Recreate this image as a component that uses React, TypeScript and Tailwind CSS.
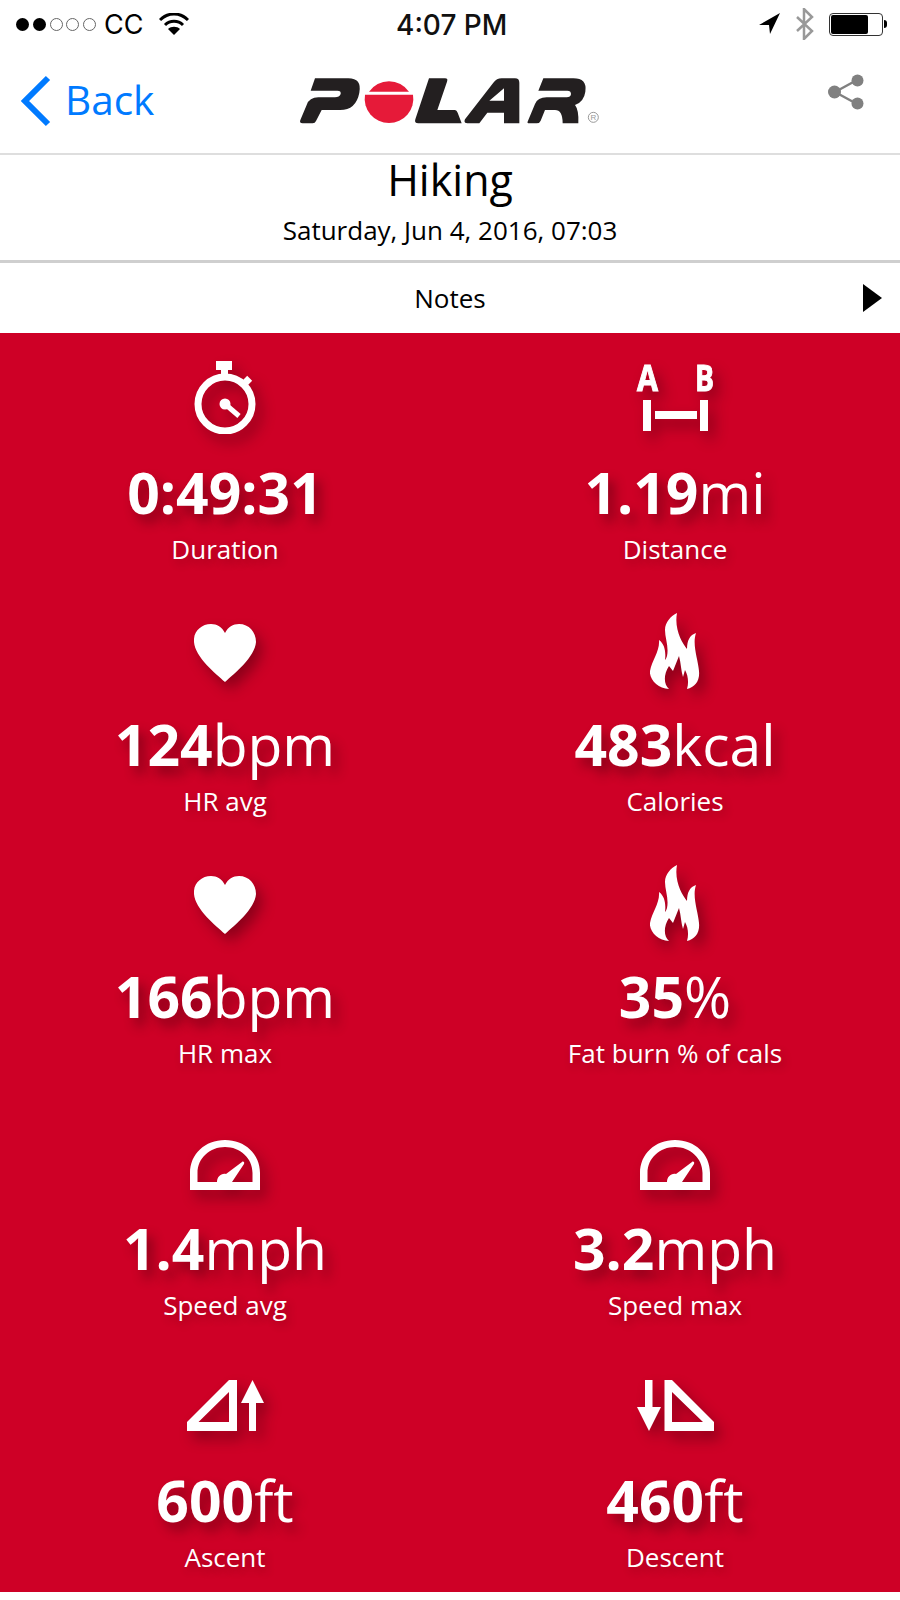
import type { ReactNode } from "react";

const SHADOW = "[filter:drop-shadow(6px_8px_7px_rgba(60,0,10,0.45))]";

function StopwatchIcon() {
  return (
    <svg width="62" height="73" viewBox="0 0 62 73" className={SHADOW}>
      <rect x="22" y="0" width="16" height="9" fill="#fff" />
      <rect x="27" y="9" width="7" height="6" fill="#fff" />
      <rect x="48" y="17" width="9" height="7" transform="rotate(-45 52.500 20.500)" fill="#fff" />
      <circle cx="31" cy="43" r="27" fill="none" stroke="#fff" strokeWidth="7" />
      <circle cx="31" cy="43" r="5.500" fill="#fff" />
      <path d="M31 43 L45 55" stroke="#fff" strokeWidth="5" fill="none" />
    </svg>
  );
}

function DistanceIcon() {
  return (
    <svg width="89" height="78" viewBox="-6 -12 89 78" className={SHADOW}>
      <g fill="#fff" stroke="#fff" strokeWidth="1" fontFamily="'Open Sans', sans-serif" fontWeight="700" fontSize="36">
        <text x="0" y="26" textLength="21" lengthAdjust="spacingAndGlyphs">A</text>
        <text x="58" y="26" textLength="19" lengthAdjust="spacingAndGlyphs">B</text>
      </g>
      <rect x="6" y="35" width="8" height="31" fill="#fff" />
      <rect x="63" y="35" width="8" height="31" fill="#fff" />
      <rect x="18" y="46" width="42" height="8" fill="#fff" />
    </svg>
  );
}

function HeartIcon() {
  return (
    <svg width="62" height="58" viewBox="0 0 62 58" className={SHADOW}>
      <path d="M31 58 C22 50 1 33 0 18 C-1 8 7 0 17 0 C23 0 28 3 31 9 C34 3 39 0 45 0 C55 0 62 8 62 18 C61 33 40 50 31 58 Z" fill="#fff" />
    </svg>
  );
}

function FlameIcon() {
  return (
    <svg width="50" height="77" viewBox="0 0 50 77" className={SHADOW}>
      <path d="M27 0 C21 3 15 9 15 17 C15 25 19 34 17 43 C16 46 15 47 15 47 C16 40 15 31 9 27 C10 38 2 47 0 58 C-1 66 8 76 19 76 C14 72 13 62 19 53 L23 58 L29 43 C31 50 31 58 33 64 L35 57 C38 62 39 70 37 76 C45 74 50 68 49 58 C48 46 42 32 46 20 C40 22 37 27 37 36 C32 30 24 16 27 0 Z" fill="#fff" />
    </svg>
  );
}

function GaugeIcon() {
  return (
    <svg width="70" height="50" viewBox="0 0 70 50" className={SHADOW}>
      <path d="M0 50 V33 C0 14 15 0 35 0 C55 0 70 14 70 33 V50 Z M7.500 42 H27 C27 37 31 33 36 34 L52 22 C53 21 55 22 54 24 L42 42 H62.500 V33 C62.500 18 50 7 35 7 C20 7 7.500 18 7.500 33 Z" fill="#fff" fillRule="evenodd" />
    </svg>
  );
}

function AscentIcon() {
  return (
    <svg width="77" height="51" viewBox="0 0 77 51" className={SHADOW}>
      <path d="M0 51 V42 L42 0 H50 V51 Z M11.500 42 H42 V12 Z" fill="#fff" fillRule="evenodd" />
      <path d="M65.500 0 L77 23 H69 V51 H62 V23 H54 Z" fill="#fff" />
    </svg>
  );
}

function DescentIcon() {
  return (
    <svg width="77" height="51" viewBox="0 0 77 51" className={SHADOW}>
      <path d="M27.500 0 H35 L77 42 V51 H27.500 Z M35 12 V42 H66 Z" fill="#fff" fillRule="evenodd" />
      <path d="M8 0 H15.500 V27 H24 L12 51 L0 27 H8 Z" fill="#fff" />
    </svg>
  );
}

type Stat = { icon: ReactNode; iconPad: string; value: string; unit?: string; label: string };

const stats: Stat[] = [
  { icon: <StopwatchIcon />, iconPad: "pt-[28px]", value: "0:49:31", label: "Duration" },
  { icon: <DistanceIcon />, iconPad: "pt-[20px]", value: "1.19", unit: "mi", label: "Distance" },
  { icon: <HeartIcon />, iconPad: "pt-[39px]", value: "124", unit: "bpm", label: "HR avg" },
  { icon: <FlameIcon />, iconPad: "pt-[28px]", value: "483", unit: "kcal", label: "Calories" },
  { icon: <HeartIcon />, iconPad: "pt-[39px]", value: "166", unit: "bpm", label: "HR max" },
  { icon: <FlameIcon />, iconPad: "pt-[28px]", value: "35", unit: "%", label: "Fat burn % of cals" },
  { icon: <GaugeIcon />, iconPad: "pt-[51px]", value: "1.4", unit: "mph", label: "Speed avg" },
  { icon: <GaugeIcon />, iconPad: "pt-[51px]", value: "3.2", unit: "mph", label: "Speed max" },
  { icon: <AscentIcon />, iconPad: "pt-[39px]", value: "600", unit: "ft", label: "Ascent" },
  { icon: <DescentIcon />, iconPad: "pt-[39px]", value: "460", unit: "ft", label: "Descent" },
];

function StatusBar() {
  return (
    <div className="relative flex h-[48px] items-center justify-between pl-[16px] pr-[13px] font-['Inter',sans-serif]">
      <div className="flex items-center">
        <div className="flex items-center gap-[3.750px]">
          <span className="h-[13px] w-[13px] rounded-full bg-black" />
          <span className="h-[13px] w-[13px] rounded-full bg-black" />
          <span className="h-[13px] w-[13px] rounded-full border border-[#666]" />
          <span className="h-[13px] w-[13px] rounded-full border border-[#666]" />
          <span className="h-[13px] w-[13px] rounded-full border border-[#666]" />
        </div>
        <span className="ml-[8px] text-[27px] leading-none text-black">CC</span>
        <svg width="30" height="22" viewBox="0 0 30 22" className="ml-[16px]">
          <path d="M1 7 C9 -1 21 -1 29 7" fill="none" stroke="#000" strokeWidth="3" />
          <path d="M6 12 C11 7 19 7 24 12" fill="none" stroke="#000" strokeWidth="3" />
          <path d="M9 16 L15 22 L21 16 C18 13 12 13 9 16 Z" fill="#000" />
        </svg>
      </div>
      <span className="absolute left-[396px] top-[9px] text-[28px] font-medium leading-[32px] text-[#111]">
        4:07 PM
      </span>
      <div className="flex items-center">
        <svg width="22" height="22" viewBox="0 0 22 22">
          <path d="M0 12 L21 0 L11 21 L10 12 Z" fill="#000" />
        </svg>
        <svg width="20" height="32" viewBox="0 0 20 32" className="ml-[14px]">
          <path d="M2 9 L17 23 L9 31 V1 L17 9 L2 23" fill="none" stroke="#999" strokeWidth="2.500" />
        </svg>
        <div className="ml-[14px] flex items-center">
          <div className="h-[23px] w-[54px] rounded-[4px] border border-[#333] p-[1px]">
            <div className="h-full w-[37px] rounded-[2px] bg-black" />
          </div>
          <div className="ml-[1px] h-[8px] w-[3px] rounded-r-full bg-black" />
        </div>
      </div>
    </div>
  );
}

// traced at 3x, so the viewBox is three times the drawn size
function PolarLogo() {
  return (
    <svg width="340" height="80" viewBox="0 0 1020 240">
      <g fill="#231f20">
        <path d="M105 55 H205 Q246 55 238 98 Q228 150 180 150 H125 L108 183 Q105 190 98 190 H68 Q56 190 62 178 L80 135 Q88 112 115 112 H165 Q178 112 182 102 Q184 92 172 92 H92 Z" />
        <path d="M447 55 H495 Q505 55 501 65 L472 150 H525 Q530 150 533 158 L545 190 H415 Q402 190 406 178 Z" />
        <path d="M555 178 L640 68 Q650 55 665 55 H705 Q718 55 718 68 V190 H672 V158 H622 L598 190 H562 Q550 190 555 178 Z M628 122 H672 V85 Z" fillRule="evenodd" />
        <path d="M790 55 H880 Q922 55 916 95 Q912 125 885 135 Q897 150 895 190 H848 Q848 150 825 150 H795 L782 182 Q779 190 770 190 H745 Q740 190 745 180 L765 132 Q773 112 800 112 H860 Q872 112 873 102 Q873 92 862 92 H775 Z" />
      </g>
      <path d="M267 95 A73 73 0 0 1 387 95 Z" fill="#e61a39" />
      <path d="M255 104 H399 A73 73 0 1 1 255 104 Z" fill="#e61a39" />
      <circle cx="940" cy="172" r="15" fill="none" stroke="#999" strokeWidth="3" />
      <text x="940" y="181" textAnchor="middle" fontFamily="'Liberation Sans', sans-serif" fontSize="24" fill="#999">R</text>
    </svg>
  );
}

function NavBar() {
  return (
    <div className="relative flex h-[107px] items-center justify-between border-b-2 border-[#dedede] pl-[20px] pr-[36px]">
      <div className="flex items-center">
        <svg width="32" height="52" viewBox="0 0 32 52">
          <path d="M28 3 L5 26 L28 49" fill="none" stroke="#007aff" strokeWidth="6" />
        </svg>
        <span className="ml-[13px] text-[40.500px] leading-none text-[#007aff]">Back</span>
      </div>
      <div className="absolute left-[280px] top-[12px]">
        <PolarLogo />
      </div>
      <svg width="36" height="36" viewBox="0 0 36 36" className="mb-[17px]">
        <path d="M7 18 L29 6 M7 18 L29 30" stroke="#808080" strokeWidth="2.500" />
        <circle cx="6.500" cy="18" r="6.500" fill="#808080" />
        <circle cx="29.500" cy="6.500" r="6" fill="#808080" />
        <circle cx="29.500" cy="29.500" r="6" fill="#808080" />
      </svg>
    </div>
  );
}

function StatCell({ stat }: { stat: Stat }) {
  return (
    <div className="flex h-[252px] flex-col items-center text-white">
      <div className={`flex h-[124px] items-start justify-center ${stat.iconPad}`}>{stat.icon}</div>
      <div className="text-[57px] leading-[70px] [text-shadow:6px_8px_12px_rgba(60,0,10,0.45)]">
        <span className="font-bold">{stat.value}</span>
        {stat.unit && <span>{stat.unit}</span>}
      </div>
      <div className="mt-[4px] text-[26px] leading-[36px] [text-shadow:3px_4px_8px_rgba(60,0,10,0.3)]">{stat.label}</div>
    </div>
  );
}

export default function App() {
  return (
    <div className="h-[1600px] w-[900px] overflow-hidden bg-white font-['Open_Sans',sans-serif] text-black">
      <StatusBar />
      <NavBar />
      <div className="flex h-[108px] flex-col items-center border-b-[3px] border-[#cfcfcf]">
        <div className="-mt-[1px] text-[43px] leading-[52px]">Hiking</div>
        <div className="mt-[6px] text-[26px] leading-[36px]">Saturday, Jun 4, 2016, 07:03</div>
      </div>
      <div className="relative flex h-[70px] items-center justify-center">
        <span className="text-[26px]">Notes</span>
        <svg width="19" height="28" viewBox="0 0 19 28" className="absolute right-[18px] top-[21px]">
          <path d="M0 0 L19 14 L0 28 Z" fill="#000" />
        </svg>
      </div>
      <div className="grid h-[1259px] grid-cols-2 bg-[#ce0026]">
        {stats.map((stat) => (
          <StatCell key={stat.label} stat={stat} />
        ))}
      </div>
    </div>
  );
}
